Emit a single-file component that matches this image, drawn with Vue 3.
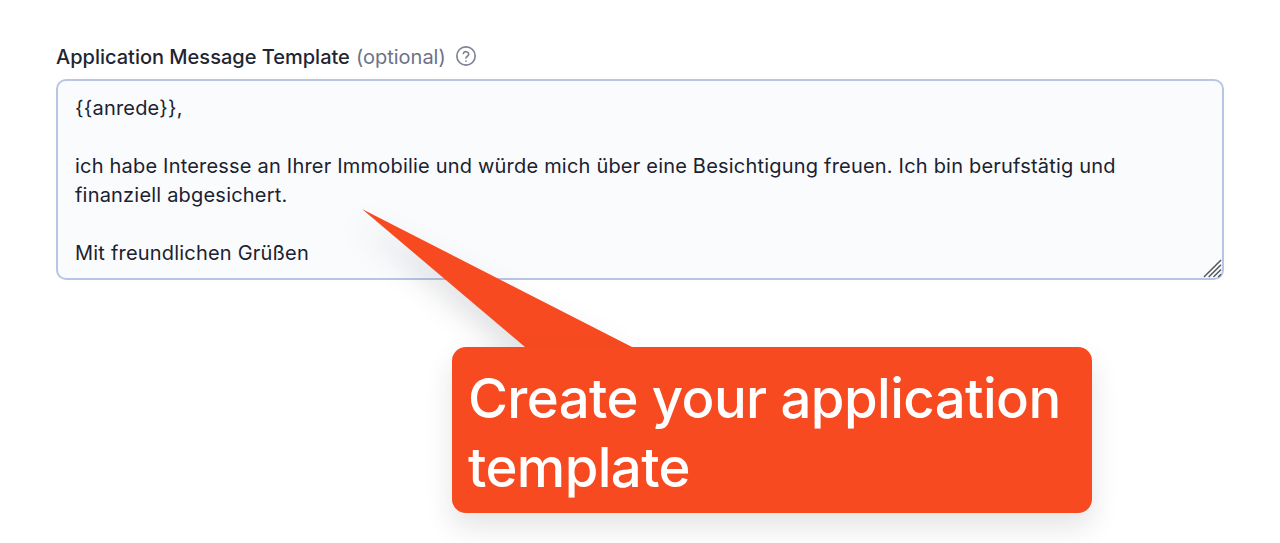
<template>
  <div class="page">
    <div class="field">
      <label class="label" for="template">
        <span>Application Message Template</span>
        <span class="optional">(optional)</span>
        <svg class="help" viewBox="0 0 24 24" fill="none" stroke="currentColor" stroke-width="1.8" stroke-linecap="round" stroke-linejoin="round">
          <circle cx="12" cy="12" r="10" />
          <path d="M9.1 9.2a3 3 0 0 1 5.8 1c0 2-3 2.6-3 4.1" />
          <path d="M12 17.6h.01" />
        </svg>
      </label>
      <div class="box">
        <textarea id="template" v-model="message" class="input" spellcheck="false"></textarea>
        <svg class="grip" viewBox="0 0 20 20" stroke="#55575f" stroke-width="1.6">
          <path d="M1 19 19 1M6 19 19 6M11 19l8-8M16 19l3-3" />
        </svg>
      </div>
    </div>

    <div class="callout">
      <svg class="tail" viewBox="0 0 270 140">
        <polygon points="0,0 270,138 163,138" />
      </svg>
      <div class="bubble">Create your application template</div>
    </div>
  </div>
</template>

<script setup>
import { ref } from 'vue';

const message = ref(`{{anrede}},

ich habe Interesse an Ihrer Immobilie und würde mich über eine Besichtigung freuen. Ich bin berufstätig und finanziell abgesichert.

Mit freundlichen Grüßen`);
</script>

<style scoped>
.page {
  position: relative;
  height: 543px;
  padding: 44px 56px 0;
  box-sizing: border-box;
  background: #fff;
  overflow: hidden;
  font-family: Inter, "Liberation Sans", sans-serif;
}

.label {
  display: flex;
  align-items: center;
  height: 26px;
  margin-bottom: 9px;
  font-size: 20px;
  font-weight: 500;
  color: #1f2533;
}

.optional {
  margin-left: 6px;
  font-weight: 400;
  color: #6b7289;
}

.help {
  width: 22px;
  height: 22px;
  margin-left: 9px;
  margin-top: -3px;
  color: #7d8296;
}

.box {
  position: relative;
  height: 201px;
}

.input {
  display: block;
  width: 100%;
  height: 100%;
  box-sizing: border-box;
  padding: 13px 40px 14px 17px;
  border: 2px solid #b9c5e5;
  border-radius: 10px;
  outline: none;
  resize: none;
  overflow: hidden;
  background: #fafbfd;
  color: #1b2230;
  font-family: inherit;
  font-size: 20px;
  letter-spacing: 0.2px;
  line-height: 29px;
}

.grip {
  position: absolute;
  right: 2px;
  bottom: 2px;
  width: 19px;
  height: 19px;
}

.callout {
  position: absolute;
  left: 362px;
  top: 209px;
}

.tail {
  display: block;
  width: 270px;
  height: 140px;
  fill: #f74a21;
  filter: drop-shadow(-6px 12px 14px rgba(30, 35, 50, 0.14));
}

.bubble {
  position: absolute;
  left: 90px;
  top: 138px;
  width: 640px;
  height: 166px;
  box-sizing: border-box;
  padding: 17px 16px;
  border-radius: 14px;
  background: #f74a21;
  box-shadow: 0 14px 28px rgba(30, 35, 50, 0.12);
  color: #fff;
  font-size: 54.5px;
  font-weight: 500;
  letter-spacing: -0.6px;
  line-height: 69px;
}
</style>
